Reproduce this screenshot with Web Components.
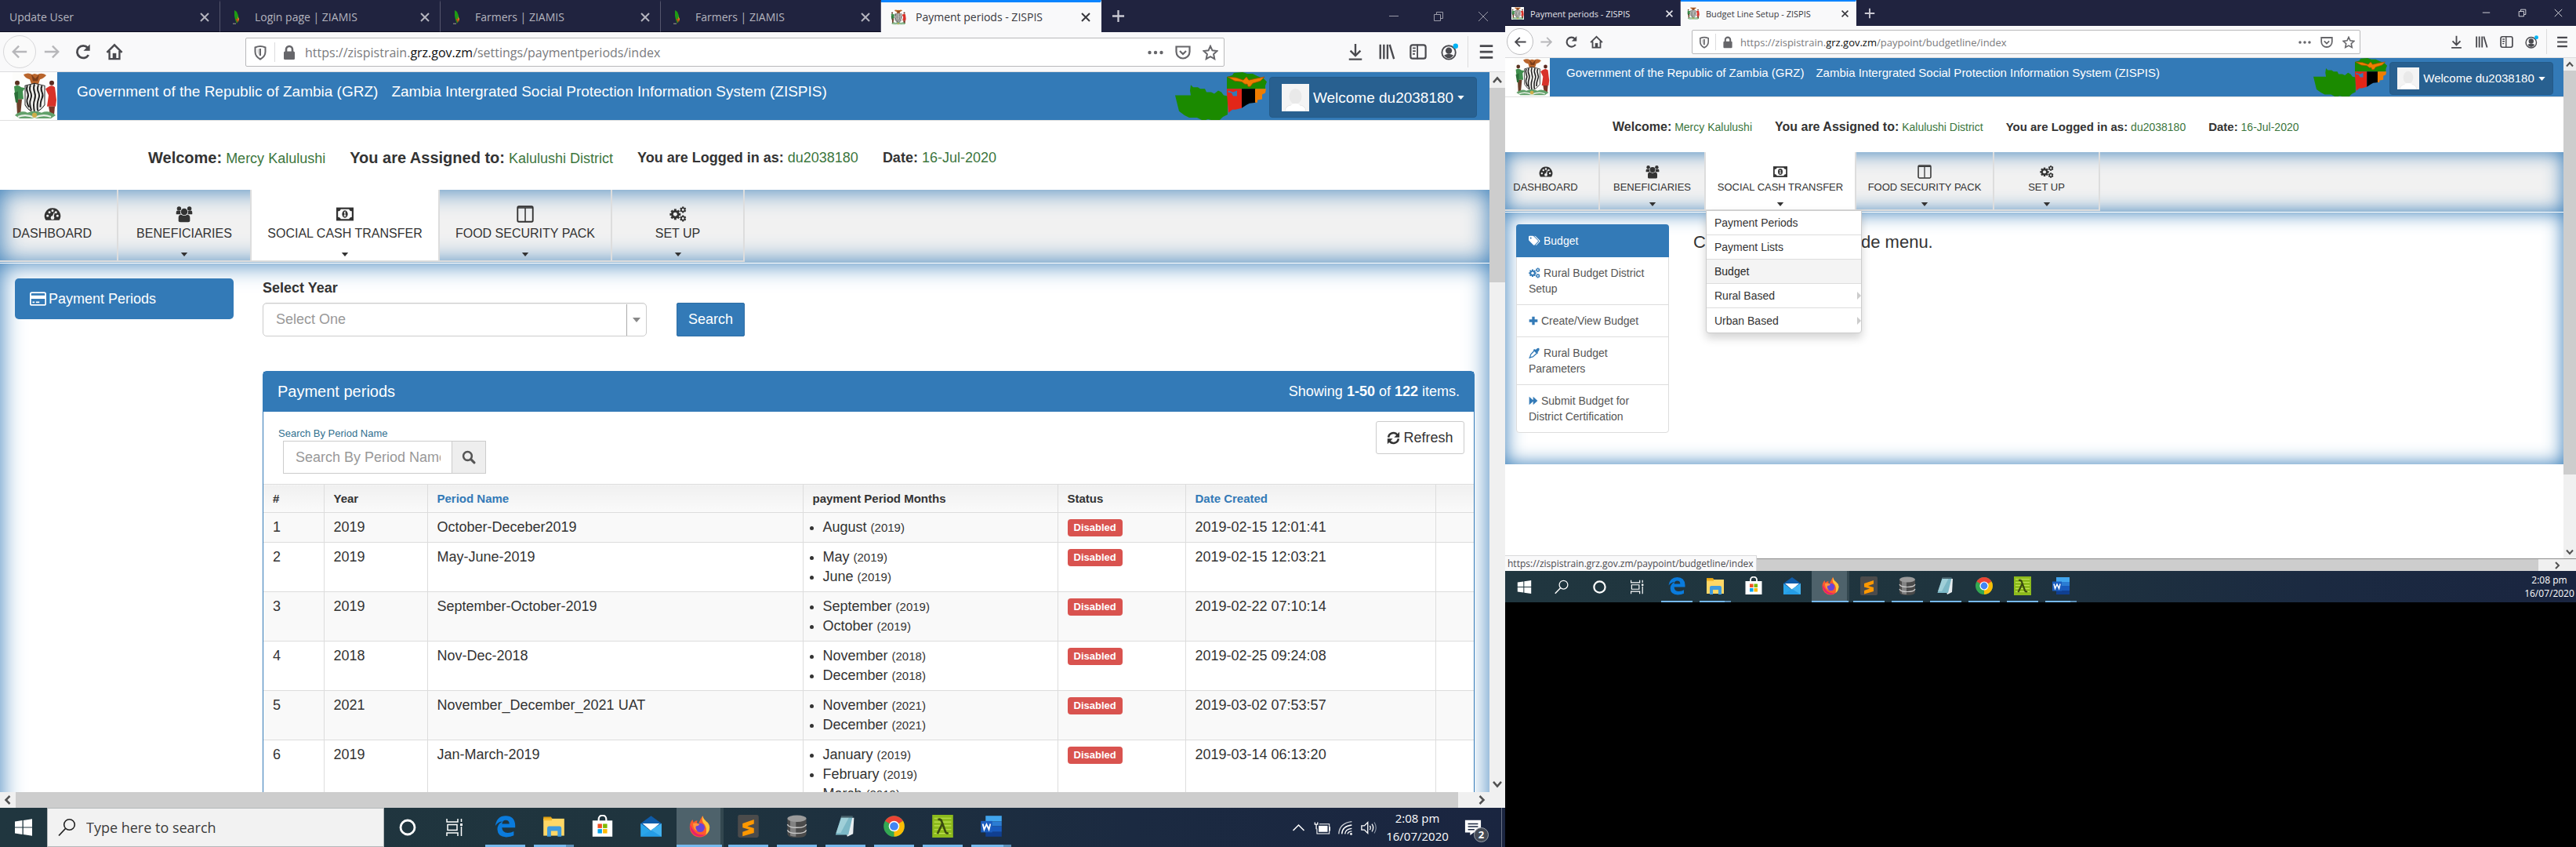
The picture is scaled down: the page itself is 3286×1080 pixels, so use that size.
<!DOCTYPE html>
<html lang="en">
<head>
<meta charset="utf-8">
<title>ZISPIS desktops</title>
<style>
html,body{margin:0;height:100%;background:#000;overflow:hidden}
body{display:grid;grid-template-columns:1920fr 1366fr;align-items:start;font-family:"Liberation Sans",Arial,sans-serif;color:#333}
desk-screen.large{
  aspect-ratio:1920/1080;
  --tab-h:41px;--tab-w:281px;--tab-font:14px;--tab-pad:12px;--tab-line:3px;--tab-ico:20px;--x-sz:14px;--ctl:57px;--ctl-sz:14px;--plus-w:42px;
  --bar-h:51px;--bar-pad:4px;--circle:42px;--tool:40px;--tool-sz:22px;--spring:147px;--url-m:7px;--url-font:16px;--url-slot:36px;--url-act:35px;--url-sz:20px;
  --sb:20px;--sb-thumb:248px;
  --head-h:61px;--logo-w:73px;--logo-img:57px;--head-font:19px;--head-pad:12px;--head-in:25px;--head-gap:17px;--map-w:117px;--user-h:52px;--user-w:265px;--user-m:6px;--user-r:16px;--ava:35px;--user-font:19px;
  --info-h:88px;--info-top:35px;--info-left:189px;--info-gap:31px;--info-big:20px;--info-b:18px;--fs:18px;--lh:25px;
  --nav-h:92px;--nav-top:20px;--nav-ico:22px;--nav-font:16px;--nav-gap:1px;--nav-caret:11px;--nav-off:16px;--glow:31px;
  --w1:151px;--w2:170px;--w3:240px;--w4:220px;--w5:169px;
  --task-h:50px;--cell:60px;--app:62px;--app-sz:29px;--app-u:51px;--app-uh:3px;--app-m:3px;--task-ico:24px;--clock:94px;--clock-font:15px;--clock-lh:23px;
}
desk-screen.small{
  aspect-ratio:1366/768;
  --tab-h:33px;--tab-w:224px;--tab-font:11px;--tab-pad:8px;--tab-line:2px;--tab-ico:16px;--x-sz:11px;--ctl:46px;--ctl-sz:11px;--plus-w:34px;
  --bar-h:41px;--bar-pad:2px;--circle:34px;--tool:32px;--tool-sz:17px;--spring:106px;--url-m:5px;--url-font:13px;--url-slot:29px;--url-act:28px;--url-sz:16px;
  --sb:16px;--sb-thumb:515px;
  --head-h:49px;--logo-w:57px;--logo-img:45px;--head-font:15px;--head-pad:9px;--head-in:21px;--head-gap:15px;--map-w:94px;--user-h:42px;--user-w:209px;--user-m:5px;--user-r:13px;--ava:28px;--user-font:15px;
  --info-h:70px;--info-top:28px;--info-left:137px;--info-gap:29px;--info-big:16px;--info-b:15px;--fs:14px;--lh:20px;
  --nav-h:75px;--nav-top:16px;--nav-ico:18px;--nav-font:13px;--nav-gap:1px;--nav-caret:8px;--nav-off:16px;--glow:25px;
  --w1:121px;--w2:135px;--w3:192px;--w4:176px;--w5:135px;
  --task-h:40px;--cell:48px;--app:49px;--app-sz:24px;--app-u:40px;--app-uh:2px;--app-m:2px;--task-ico:19px;--clock:68px;--clock-font:12px;--clock-lh:17px;
}
</style>
</head>
<body>
<desk-screen class="large">
  <browser-window dim>
    <browser-tab slot="tabs">Update User</browser-tab>
    <browser-tab slot="tabs" icon="favmap">Login page | ZIAMIS</browser-tab>
    <browser-tab slot="tabs" icon="favmap">Farmers | ZIAMIS</browser-tab>
    <browser-tab slot="tabs" icon="favmap">Farmers | ZIAMIS</browser-tab>
    <browser-tab slot="tabs" icon="arms" active>Payment periods - ZISPIS</browser-tab>
    <span slot="path">/settings/paymentperiods/index</span>
    <zispis-page><payment-periods></payment-periods></zispis-page>
  </browser-window>
  <task-bar slot="taskbar" searchbox></task-bar>
</desk-screen>
<desk-screen class="small">
  <browser-window status="https://zispistrain.grz.gov.zm/paypoint/budgetline/index">
    <browser-tab slot="tabs" icon="arms">Payment periods - ZISPIS</browser-tab>
    <browser-tab slot="tabs" icon="arms" active>Budget Line Setup - ZISPIS</browser-tab>
    <span slot="path">/paypoint/budgetline/index</span>
    <zispis-page menu><budget-setup></budget-setup></zispis-page>
  </browser-window>
  <task-bar slot="taskbar"></task-bar>
</desk-screen>

<script>
const BASE = `*,:host{box-sizing:border-box}a{color:inherit;text-decoration:none}button,input,select{font:inherit;color:inherit;background:none;border:0;padding:0;margin:0}
button{display:flex;align-items:center;justify-content:center}`;
const UI = `"Open Sans","Noto Sans",sans-serif`;

const gear = (cx, cy, r, n, tooth, hole) => {
  let teeth = '';
  for (let i = 0; i < n; i++) teeth += `<rect x="${cx - tooth / 2}" y="${cy - r}" width="${tooth}" height="${r}" transform="rotate(${i * 360 / n} ${cx} ${cy})"/>`;
  return `${teeth}<path fill-rule="evenodd" d="M${cx - r * .76} ${cy}a${r * .76} ${r * .76} 0 1 0 ${r * 1.52} 0a${r * .76} ${r * .76} 0 1 0 ${-r * 1.52} 0z"/><circle cx="${cx}" cy="${cy}" r="${hole}" fill="var(--hole,#eff0f1)"/>`;
};
const S = 'fill="none" stroke="currentColor" stroke-width="2"';
const ICONS = {
  x: ['0 0 14 14', `<path ${S} d="M2 2l10 10M12 2L2 12"/>`],
  plus: ['0 0 18 18', `<path fill="none" stroke="currentColor" stroke-width="2.400" d="M9 1v16M1 9h16"/>`],
  min: ['0 0 14 14', `<path fill="none" stroke="currentColor" d="M1 6.500h12"/>`],
  restore: ['0 0 14 14', `<path fill="none" stroke="currentColor" d="M1.500 4.500h8v8h-8zM4.500 4V1.500h8v8H10"/>`],
  thinx: ['0 0 14 14', `<path fill="none" stroke="currentColor" d="M1 1l12 12M13 1L1 13"/>`],
  back: ['0 0 24 24', `<path fill="none" stroke="currentColor" stroke-width="2.600" d="M22 12H3M11 4l-8 8 8 8"/>`],
  fwd: ['0 0 24 24', `<path fill="none" stroke="currentColor" stroke-width="2.600" d="M2 12h19M13 4l8 8-8 8"/>`],
  reload: ['0 0 24 24', `<path fill="none" stroke="currentColor" stroke-width="3" d="M19.500 16.500A8.500 8.500 0 1 1 18.500 6.500"/><path fill="currentColor" d="M21.500 1.500v9h-9z"/>`],
  home: ['0 0 24 24', `<path fill="none" stroke="currentColor" stroke-width="2.600" d="M1.500 13L12 2.500 22.500 13M5 11v11h14V11"/><path fill="currentColor" d="M9.500 14h5v8h-5z"/>`],
  shield: ['0 0 20 20', `<path ${S} d="M3.500 3.500Q10 .5 16.500 3.500V9q0 6-6.500 9.500Q3.500 15 3.500 9z"/><path fill="currentColor" d="M10 5v9.500Q6.500 12 6.500 9V5.500z" opacity=".3"/><path ${S} d="M10 5v9"/>`],
  lock: ['0 0 20 20', `<rect x="3" y="8.500" width="14" height="10.500" rx="1.500" fill="currentColor"/><path fill="none" stroke="currentColor" stroke-width="2.600" d="M6 9V6a4 4 0 0 1 8 0v3"/>`],
  dots: ['0 0 20 20', `<g fill="currentColor"><circle cx="2.500" cy="10" r="2.200"/><circle cx="10" cy="10" r="2.200"/><circle cx="17.500" cy="10" r="2.200"/></g>`],
  pocket: ['0 0 20 20', `<path fill="none" stroke="currentColor" stroke-width="2.200" d="M1.500 2.500h17V9a8.500 8.500 0 0 1-17 0zM6 8l4 4 4-4"/>`],
  star: ['0 0 20 20', `<path ${S} d="M10 1.800l2.500 5.500 6 .7-4.400 4.100 1.200 6L10 15.100 4.700 18.100l1.200-6L1.500 8l6-.7z"/>`],
  download: ['0 0 24 24', `<path fill="none" stroke="currentColor" stroke-width="2.600" d="M12 1v16M5 10.500l7 7 7-7M3 22.500h18"/>`],
  library: ['0 0 24 24', `<path fill="none" stroke="currentColor" stroke-width="2.600" d="M3 2v20M8 2v20M13 2v20M16 2l6 20"/>`],
  sidebar: ['0 0 24 24', `<rect fill="none" stroke="currentColor" stroke-width="2.400" x="1.500" y="2.500" width="21" height="19" rx="3"/><path ${S} d="M11 2v20M4.500 7h4M4.500 11h4M4.500 15h3"/>`],
  account: ['0 0 24 24', `<circle ${S} cx="11" cy="13" r="9.500"/><circle cx="11" cy="10.500" r="4.500" fill="currentColor"/><path fill="currentColor" d="M4.500 17q6.500-4 13 0-2.500 4-6.500 4t-6.500-4z"/><circle cx="20.500" cy="4" r="3.500" fill="#00b3f4"/>`],
  menu: ['0 0 24 24', `<path fill="none" stroke="currentColor" stroke-width="3" d="M3 4h18M3 12h18M3 20h18"/>`],
  up: ['0 0 16 16', `<path ${S} d="M4 10.500L8 6l4 4.500"/>`],
  down: ['0 0 16 16', `<path ${S} d="M4 5.500L8 10l4-4.500"/>`],
  left: ['0 0 16 16', `<path ${S} d="M10 4L6 8l4 4"/>`],
  right: ['0 0 16 16', `<path ${S} d="M6 4l4 4-4 4"/>`],
  caret: ['0 0 10 6', `<path fill="currentColor" d="M0 0h10L5 6z"/>`],
  arms: ['0 0 57 60', `<rect width="57" height="60" fill="#fdfdfb"/>
    <path d="M14 3q6-3 11 0l3-1 4 1q6-3 11 1-3 4-8 5l-2 6h-9l-2-6q-6-1-8-6z" fill="#b9652c"/><path d="M24 3l5 5 5-5-2 8h-6z" fill="#7c3f1c"/>
    <path d="M16 17l12-3 13 3v24q-5 7-13 10-8-3-12-10z" fill="#f4f4f0" stroke="#222" stroke-width="1"/>
    <path d="M19 17q-2 4 0 8t0 8 2 11M23 16q-2 5 0 9t0 9 1 14M28 15q-2 5 0 10t0 10 0 15M33 16q-2 5 0 9t0 9-1 14M37.500 17q-2 4 0 8t0 8-2 11" fill="none" stroke="#222" stroke-width="2"/>
    <circle cx="6" cy="13.500" r="3" fill="#5a3220"/><path d="M2 18q5-3 9 1l5 1-3 4 1 10H4z" fill="#3f8f4d"/><path d="M5 34h7l-2 20H6z" fill="#6b3f2a"/><path d="M2 26l2 12h3V24z" fill="#2b6e38"/>
    <circle cx="50" cy="13.500" r="3" fill="#5a2a20"/><path d="M45 19q5-4 9 0l2 16-1 8H44l2-14-4-8z" fill="#d8322a"/><path d="M46 43h8l-1 11h-5z" fill="#7a3326"/>
    <path d="M3 54q8-7 16-3 9-4 18 0 9-4 18 3l-6 4H9z" fill="#62a06a"/><path d="M7 56q10-4 21 1 11-5 21-1" fill="none" stroke="#e8efe6" stroke-width="2"/><circle cx="28" cy="54" r="3" fill="#cfae4a"/>`],
  favmap: ['0 0 20 20', `<path d="M6 1l3 2 2 5v4l-4 1-1-5z" fill="#1f9b14"/><path d="M8 7l3 2 1 4-3 5-2-5z" fill="#1f9b14"/><path d="M8 12h3l-1 5z" fill="#e52a1a"/><path d="M10 9l2 3-1 4z" fill="#f0862a"/><path d="M4 17.500h4V19H4z" fill="#777"/>`],
  map: ['0 0 117 60', `<path fill="#1b8a00" d="M0 29h20l-1-6 1-7 3 3 6 0 3 2 6 0 2 4 6 0 4 2 5-4 4 2 3 4 5 1v23l-6 3-5 5-6 0-8-2-6 2-8-4-10 0-6-3-7-5z"/>
    <path fill="#1b8a00" d="M66 21V6l7-2 2-3 11-1 6 2 7 0 6 3 8 3 4 4-2 5 0 4z"/>
    <path fill="#e32618" d="M66 27V21h19v24l-8 2-4 0-5 4z"/><path fill="#337ab7" d="M68 23l6 2 5-2 0 7-5 0-2-4-5-1z"/>
    <path fill="#000" d="M85 21h18v17l-8 1-4 2-6 4z"/><path fill="#ef7d00" d="M102 21h14l-1 5-4 2 0 6-6 1 0 3-3 0z"/>
    <path fill="#ef7d00" d="M67 6l11 1 9 3 4-4 3 4 9-2 11-2-5 5-10 3-3 4-3 0-1-3-3 0-4-3-9-1z" stroke="#a34c00" stroke-width=".8"/>`],
  person: ['0 0 35 35', `<rect width="35" height="35" fill="#f4f4f4"/><path d="M4 35q1-8 9-8h9q8 0 9 8z" fill="#fff" stroke="#dcdcdc" stroke-width=".6"/><ellipse cx="17.500" cy="16" rx="8" ry="10" fill="#e9e9e9"/><ellipse cx="17.500" cy="28" rx="6" ry="3" fill="#fff"/>`],
  dash: ['0 0 28 24', `<path fill="currentColor" d="M14 2A13 13 0 0 0 3 22h22A13 13 0 0 0 14 2z"/><g fill="var(--hole,#eff0f1)"><circle cx="6" cy="15" r="1.900"/><circle cx="9" cy="9" r="1.900"/><circle cx="14" cy="6.500" r="1.900"/><circle cx="22" cy="15" r="1.900"/><circle cx="19.500" cy="9" r="1.900"/><circle cx="14" cy="18" r="3"/><path d="M13 17l3.500-8 1 .4-2 8.600z"/></g>`],
  group: ['0 0 30 28', `<g fill="currentColor"><circle cx="15" cy="10" r="5.800"/><circle cx="6" cy="4.500" r="3.700"/><circle cx="24" cy="4.500" r="3.700"/><path d="M5 26V20q0-5 5-5 5 3.500 10 0 5 0 5 5v6q0 2-3 2H8q-3 0-3-2zM1 14V11q0-3 2.500-3 2.500 1 5 .5-1 4 1 6H2.500Q1 14.500 1 14zM29 14V11q0-3-2.500-3-2.500 1-5 .5 1 4-1 6h7Q29 14.500 29 14z"/></g>`],
  money: ['0 0 30 24', `<rect x="1.500" y="2" width="27" height="20" fill="none" stroke="currentColor" stroke-width="3"/><path fill="currentColor" d="M2 2h6q0 5-6 5zM28 2h-6q0 5 6 5zM2 22h6q0-5-6-5zM28 22h-6q0-5 6-5z"/><ellipse cx="15" cy="12" rx="5" ry="6.500" fill="currentColor"/><path stroke="#fff" stroke-width="1.600" fill="none" d="M13.500 9.500L15 8.500v6.500M13 15.200h4"/>`],
  columns: ['0 0 26 26', `<rect x="1.500" y="1.500" width="23" height="23" rx="2" fill="none" stroke="currentColor" stroke-width="2.200"/><path fill="none" stroke="currentColor" stroke-width="1.800" d="M13 3v21M2 3.500h22"/>`],
  cogs: ['0 0 30 28', `<g fill="currentColor">${gear(10, 14.5, 9.5, 8, 4, 3.4)}${gear(23.5, 6.5, 5.5, 6, 3, 1.9)}${gear(23.5, 21.5, 5.5, 6, 3, 1.9)}</g>`],
  card: ['0 0 24 20', `<path fill="none" stroke="currentColor" stroke-width="2" d="M3 1h18q2 0 2 2v14q0 2-2 2H3q-2 0-2-2V3q0-2 2-2z"/><path fill="currentColor" d="M1 5h22v5H1zM4 14h3v2H4zM9 14h5v2H9z"/>`],
  search: ['0 0 20 20', `<circle cx="8.300" cy="8.300" r="6" fill="none" stroke="currentColor" stroke-width="2.800"/><path stroke="currentColor" stroke-width="3.400" stroke-linecap="round" d="M13 13l4.700 4.700"/>`],
  refresh: ['0 0 20 20', `<path fill="none" stroke="currentColor" stroke-width="3" d="M2.500 9A7.500 7.500 0 0 1 16 5.500M17.500 11A7.500 7.500 0 0 1 4 14.500"/><path fill="currentColor" d="M19 1v8h-8zM1 19v-8h8z"/>`],
  tags: ['0 0 24 20', `<path fill="currentColor" fill-rule="evenodd" d="M0 2q0-2 2-2h6q1.500 0 3 1.500L18.500 9q1.500 1.500 0 3l-6 6.500q-1.500 1.500-3 0L1.500 10.500Q0 9 0 7.500zM4.200 2.600a1.700 1.700 0 1 0 .1 0z"/><path fill="currentColor" d="M11.500 0q2 0 3.500 1.500L22.500 9q1.500 1.500 0 3l-6 6.500q-1.200 1.200-2.500.6L20.500 12q1-1.500 0-2.500z"/>`],
  cross: ['0 0 18 20', `<path fill="currentColor" d="M6.500 2h5v5.500H17v5h-5.500V18h-5v-5.500H1v-5h5.500z"/>`],
  dropper: ['0 0 20 20', `<path fill="currentColor" d="M13 3.500Q15.500 0 18 1.500 20 3.500 17 7l-1.500 1.500 1 1.500-2 2-7-7 2-2 1.500 1z"/><path fill="none" stroke="currentColor" stroke-width="1.800" d="M9 6.500L3 13l-1 4-1 2 2-1 4-1 6.500-6"/>`],
  ff: ['0 0 18 20', `<path fill="currentColor" d="M1 2l7.500 7V2L17 10 8.500 18v-7L1 18z"/>`],
  win: ['0 0 24 24', `<path fill="#fff" d="M1 4.500l9.500-1.400v8.300H1zM11.800 2.900L23 1.300v10.100H11.800zM1 12.600h9.500v8.300L1 19.500zM11.800 12.600H23v10.100l-11.200-1.600z"/>`],
  loupe: ['0 0 24 24', `<circle cx="14.500" cy="8.500" r="6.800" fill="none" stroke="currentColor" stroke-width="1.600"/><path stroke="currentColor" stroke-width="1.800" d="M9.500 13.500L1 22.500"/>`],
  ring: ['0 0 24 24', `<circle cx="12" cy="12" r="9" fill="none" stroke="#fff" stroke-width="2.800"/>`],
  task: ['0 0 24 24', `<path fill="none" stroke="#fff" stroke-width="1.500" d="M2 1v4h14V1M2 23v-4h14v4M3 8.500h12v7H3zM20.500 1v4M20.500 11v12"/><path fill="#fff" d="M19 7h3v3h-3z"/>`],
  edge: ['0 0 24 24', `<path fill="#0a7bdc" d="M1.500 11.500Q3 1 12.500 1 22 1 22.500 11v2.500H8.500Q9 19 14.500 19q4 0 6.500-1.700v4.500Q18 23.500 13 23.500 4 23 3.700 15.500 3.500 10 9 7 5 7 1.500 11.500zM8.600 9.500h7.700q0-4-3.800-4-3.500 0-3.900 4z"/>`],
  folder: ['0 0 24 24', `<path fill="#e0a010" d="M1 2h8l2 3H1z"/><path fill="#ffd766" d="M1 4h22v18H1z"/><path fill="#f5b92e" d="M1 4h9v2H1z"/><path fill="#3f9bdf" d="M5 23v-9q0-2 2-2h11q2 0 2 2v9h-4v-6H9v6z"/>`],
  store: ['0 0 24 24', `<path fill="none" stroke="#fff" stroke-width="1.800" d="M8 7V4.500a4 4 0 0 1 8 0V7"/><path fill="#fff" d="M1.500 6h21v17h-21z"/><path fill="#f25022" d="M7 9.500h4.500V14H7z"/><path fill="#7fba00" d="M12.500 9.500H17V14h-4.500z"/><path fill="#00a4ef" d="M7 15h4.500v4.500H7z"/><path fill="#ffb900" d="M12.500 15H17v4.500h-4.500z"/>`],
  mail: ['0 0 24 24', `<path fill="#0f5ba8" d="M1 9l11-8 11 8v5H1z"/><path fill="#fff" d="M3 9h18l-9 8z"/><path fill="#2aa5ea" d="M1 9l11 8 11-8v14H1z"/><path fill="#57c6fa" d="M12 16l11 7V9z"/><path fill="#1d8fe0" d="M1 23L23 9v14z" opacity=".35"/>`],
  firefox: ['0 0 24 24', `<path fill="#ff5a2c" d="M12 23.500A10.500 10.500 0 0 1 1.500 13Q1.500 8 4.500 5l1 3q2-2 4-2-1 2 1 4Q13 4 15 1q1 4 4 6t3.500 6A10.500 10.500 0 0 1 12 23.500z"/><path fill="#ffc53a" d="M15 1q1 4 4 6t3.500 6q0 5-4 8 2-8-3-13-1.500-3-.5-7z"/><path fill="#e5226e" d="M2 10q-1 7 5 11.500 5 3 11-.5-7 1-11-3T2 10z"/><circle cx="12.500" cy="13.500" r="4.800" fill="#6b45d8"/><path fill="#ff9640" d="M5 9q4-1 7 1-1 2-4 2-1 3 2 5-5-1-5-8z"/>`],
  sublime: ['0 0 24 24', `<rect x="1" y="0" width="22" height="24" rx="2" fill="#4b4b4b"/><path fill="#ff9800" d="M6 9l12-4v4.500L11 12l7 2v5L6 22.500V18l7-2.500-7-2z"/>`],
  db: ['0 0 24 24', `<path fill="#4a4a4a" d="M2 4v16q0 4 10 4t10-4V4z"/><path fill="#9a9a9a" d="M5 6v16q3 1 6 1V7z" opacity=".7"/><ellipse cx="12" cy="4" rx="10" ry="3.500" fill="#9b9b9b"/><path fill="none" stroke="#c9c9c9" stroke-width="1.200" d="M2 10q1 3.500 10 3.500T22 10M2 16q1 3.500 10 3.500T22 16"/>`],
  notepad: ['0 0 24 24', `<path fill="#e9eef0" d="M8 3h13l-1 17-6 3z"/><path fill="#7cb8c6" d="M7.500 2h12L15 21H1.500z"/><path fill="#b7dde5" d="M8 2l8 0-9 17H2z" opacity=".6"/><path fill="#46606a" d="M7.500 1h12v2h-12z"/>`],
  chrome: ['0 0 24 24', `<circle cx="12" cy="12" r="11" fill="#34a853"/><path fill="#ea4335" d="M12 12L2.500 6.500A11 11 0 0 1 21.500 6.500z"/><path fill="#fbbc05" d="M12 12l9.500-5.500A11 11 0 0 1 12 23z"/><circle cx="12" cy="12" r="5.600" fill="#fff"/><circle cx="12" cy="12" r="4.400" fill="#4285f4"/>`],
  lambda: ['0 0 24 24', `<path fill="#8dbb1c" d="M1 0h22v24H1z"/><path stroke="#c2e356" stroke-width="1" d="M3 3.500h18M3 7.500h18M3 11.500h18M3 15.500h18M3 19.500h18"/><path fill="none" stroke="#3a4a10" stroke-width="2.200" d="M7 5q3-1 4 2l4 11q1 2 3 1M11.500 9.500L6.500 20"/>`],
  word: ['0 0 24 24', `<path fill="#41a5ee" d="M6 1h17v6H6z"/><path fill="#2b7cd3" d="M6 7h17v5H6z"/><path fill="#185abd" d="M6 12h17v6H6z"/><path fill="#103f91" d="M6 18h17v5H6z"/><path fill="#1b5dbe" d="M1 6.500h12v12H1z"/><path fill="none" stroke="#fff" stroke-width="1.500" d="M3 9.500l1.500 6L7 10l2.500 5.500 1.500-6"/>`],
  battery: ['0 0 24 24', `<path fill="#fff" d="M7 9h13v9H7z"/><path fill="none" stroke="#fff" stroke-width="1.200" d="M4.500 13v7.500h18v-14H8M23.500 10.500v6"/><path fill="none" stroke="#fff" stroke-width="1.500" d="M1.500 4v3h4V4M3.500 7v7"/>`],
  wifi: ['0 0 24 24', `<g fill="none" stroke="#fff" stroke-width="1.500"><path d="M2 21Q3 5 21 3" opacity=".8"/><path d="M6.500 21Q7 9.500 21 8"/><path d="M11 21Q11.500 14 21 13"/><path d="M15 21q.5-3.500 6-4"/></g><circle cx="20" cy="21" r="1.600" fill="#fff"/>`],
  volume: ['0 0 24 24', `<path fill="none" stroke="#fff" stroke-width="1.500" d="M1 9h4l5-5v16l-5-5H1zM13 9q2 3 0 6M16 6.500q4 5.500 0 11"/><path fill="none" stroke="#8a95a5" stroke-width="1.300" d="M19.500 4q5 8 0 16"/>`],
  chev: ['0 0 24 24', `<path fill="none" stroke="#fff" stroke-width="1.800" d="M4 16l8-8 8 8"/>`],
  note: ['0 0 24 24', `<path fill="#fff" d="M1 2h22v17H13l-5 4v-4H1z"/><path stroke="#1b2740" stroke-width="1.600" d="M5 7h14M5 11h14M5 15h9"/>`],
};

function define(name, css, html) {
  customElements.define(name, class extends HTMLElement {
    constructor() {
      super();
      this.attachShadow({ mode: 'open' });
    }
    connectedCallback() {
      if (this.done) return;
      this.done = true;
      this.shadowRoot.innerHTML = `<style>${BASE}${css}</style>` + (typeof html === 'function' ? html(this) : html);
    }
  });
}

define('ui-icon', `:host{display:inline-block;width:var(--sz,16px);height:var(--sz,16px);flex:none}svg{display:block;width:100%;height:100%}`,
  el => { const n = el.getAttribute('name'), [box, art] = ICONS[n]; return `<svg viewBox="${box}" ${n === 'arms' || n === 'map' ? 'preserveAspectRatio="none"' : ''} aria-hidden="true">${art}</svg>`; });

define('desk-screen', `:host{display:flex;flex-direction:column;overflow:hidden;min-width:0}::slotted(browser-window){flex:1;min-height:0}`,
  `<slot></slot><slot name="taskbar"></slot>`);

define('browser-tab', `
:host{display:flex;align-items:center;width:var(--tab-w);height:var(--tab-h);flex:none;padding:0 var(--tab-pad);gap:var(--tab-pad);font-family:${UI};font-size:var(--tab-font);color:#b4b4be;border-right:1px solid #55566d;border-top:var(--tab-line) solid transparent;border-bottom:1px solid #0c0c20}
:host([active]){background:#f9f9fa;color:#38383d;border-top-color:#0a84ff;border-right-color:#f9f9fa;border-bottom-color:#f9f9fa}
span{flex:1;white-space:nowrap}.ico{--sz:var(--tab-ico)}.x{--sz:var(--x-sz)}`,
  el => `${el.hasAttribute('icon') ? `<ui-icon class="ico" name="${el.getAttribute('icon')}"></ui-icon>` : ''}<span><slot></slot></span><button aria-label="Close tab"><ui-icon class="x" name="x"></ui-icon></button>`);

define('browser-window', `
:host{display:flex;flex-direction:column;background:#fff;position:relative;--tint:#e4e4ea}
:host([dim]){--tint:#b4b4be}
.tabs{display:flex;background:#20233f;height:var(--tab-h);flex:none}
.tabs ::slotted(browser-tab:not([active])){color:var(--tint)}
.new{width:var(--plus-w);color:#c9c9d2;--sz:calc(var(--x-sz) + 3px)}
.grow{flex:1}.ctl{width:var(--ctl);--sz:var(--ctl-sz);color:#fff}:host([dim]) .ctl{color:#9a9aa8}
.bar{display:flex;align-items:center;background:#f9f9fa;height:var(--bar-h);flex:none;border-bottom:1px solid #dcdcde;padding:0 var(--bar-pad);color:#4a4a4f;--sz:var(--tool-sz)}
.t{width:var(--tool);height:100%}.off{color:#b7b7ba}
.back{width:var(--circle);height:var(--circle);border:1px solid #bdbdc0;border-radius:50%;background:#fff}:host([dim]) .back{color:#b7b7ba;border-color:#d8d8da;background:#fafafa}
.spring{width:var(--spring)}
.url{flex:1;display:flex;align-items:center;align-self:stretch;margin:var(--url-m) 0 calc(var(--url-m) - 1px);background:#fff;border:1px solid #b9b9bb;border-radius:2px;--sz:var(--url-sz);color:#66666a}
.s{width:var(--url-slot);display:flex;justify-content:center}.a{width:var(--url-act)}
.v{width:1px;background:#dcdcde;height:70%}.sep{width:1px;height:80%;background:#dcdcde;margin:0 3px}
.addr{flex:1;font-family:${UI};font-size:var(--url-font);color:#7a7a7d;padding-left:2px;white-space:nowrap}.addr b{font-weight:400;color:#0c0c0d}
.view{flex:1;display:flex;min-height:0}.page{flex:1;min-width:0;overflow:hidden}
.vs{width:var(--sb);background:#f0f0f0;display:flex;flex-direction:column;color:#505050;--sz:var(--sb)}
.thumb{background:#cdcdcd}.vs .thumb{height:var(--sb-thumb)}.vs .rest{flex:1}
.hs{height:var(--sb);background:#f0f0f0;display:flex;color:#505050;--sz:var(--sb)}.hs .thumb{flex:1}.hs .rest{width:var(--sb)}
:host([status]) .hs{border-top:1px solid #8c8c8c}
.status{position:absolute;left:0;bottom:0;height:20px;background:#f9f9fa;border:1px solid #d8d8da;border-left:0;border-bottom:0;font:12px/19px ${UI};color:#4a4a4f;padding:0 3px}`,
  el => `<div class="tabs"><slot name="tabs"></slot><button class="new" aria-label="New tab"><ui-icon name="plus"></ui-icon></button><div class="grow"></div>
<button class="ctl" aria-label="Minimize"><ui-icon name="min"></ui-icon></button><button class="ctl" aria-label="Restore"><ui-icon name="restore"></ui-icon></button><button class="ctl" aria-label="Close"><ui-icon name="thinx"></ui-icon></button></div>
<div class="bar"><button class="back" aria-label="Back"><ui-icon name="back"></ui-icon></button><button class="t off" aria-label="Forward"><ui-icon name="fwd"></ui-icon></button><button class="t" aria-label="Reload"><ui-icon name="reload"></ui-icon></button><button class="t" aria-label="Home"><ui-icon name="home"></ui-icon></button>
<div class="spring"></div><div class="url"><div class="s"><ui-icon name="shield"></ui-icon></div><div class="v"></div><div class="s"><ui-icon name="lock"></ui-icon></div><div class="addr">https://zispistrain.<b>grz.gov.zm</b><slot name="path"></slot></div>
${['dots', 'pocket', 'star'].map(n => `<button class="a" aria-label="${n}"><ui-icon name="${n}"></ui-icon></button>`).join('')}</div><div class="spring"></div>
${['download', 'library', 'sidebar', 'account'].map(n => `<button class="t" aria-label="${n}"><ui-icon name="${n}"></ui-icon></button>`).join('')}<div class="sep"></div><button class="t" aria-label="Menu"><ui-icon name="menu"></ui-icon></button></div>
<div class="view"><div class="page"><slot></slot></div><div class="vs"><ui-icon name="up"></ui-icon><div class="thumb"></div><div class="rest"></div><ui-icon name="down"></ui-icon></div></div>
<div class="hs"><ui-icon name="left"></ui-icon><div class="thumb"></div><div class="rest"></div><ui-icon name="right"></ui-icon><div class="rest"></div></div>
${el.hasAttribute('status') ? `<div class="status">${el.getAttribute('status')}</div>` : ''}`);

define('nav-item', `
:host{display:block;height:var(--nav-h);border-right:2px solid #ddd;border-bottom:2px solid #ddd}
:host([active]){background:#fff;--hole:#fff}
a{display:flex;flex-direction:column;align-items:center;padding-top:var(--nav-top);font-size:var(--nav-font);line-height:var(--lh);white-space:nowrap;gap:var(--nav-gap);--sz:var(--nav-ico)}
:host([plain]) a{padding-right:var(--nav-off)}
.c{width:10px;height:5px;margin-top:var(--nav-caret)}`,
  el => `<a href="#"><ui-icon name="${el.getAttribute('icon')}"></ui-icon><slot></slot>${el.hasAttribute('plain') ? '' : '<ui-icon class="c" name="caret"></ui-icon>'}</a>`);

define('drop-menu', `
:host{display:block;position:absolute;top:calc(100% - 2px);left:calc(var(--w1) + var(--w2));width:199px;z-index:5}
nav{background:#fff;border:1px solid #ccc;border-radius:0 0 4px 4px;box-shadow:0 6px 12px rgba(0,0,0,.175);font-size:var(--fs)}
a{display:flex;align-items:center;justify-content:space-between;height:31px;padding-left:10px;border-bottom:1px solid #ddd}a:last-child{border-bottom:0}a.on{background:#f4f4f4;color:#262626}
i{border:5px solid transparent;border-left-color:#ccc;border-right:0}`,
  `<nav><a href="#">Payment Periods</a><a href="#">Payment Lists</a><a href="#" class="on">Budget</a><a href="#">Rural Based<i></i></a><a href="#">Urban Based<i></i></a></nav>`);

define('zispis-page', `
:host{display:block;font-size:var(--fs);line-height:var(--lh)}
header{display:flex;height:calc(var(--head-h) + 1px);border-bottom:1px solid #e0e0e0}
.logo{width:var(--logo-w);display:flex;justify-content:flex-end}.logo ui-icon{width:var(--logo-img);height:var(--head-h)}
.blue{flex:1;display:flex;background:#337ab7;color:#fff}
.brand{display:flex;gap:var(--head-gap);padding:var(--head-pad) 0 0 var(--head-in);font-size:var(--head-font);flex:1;white-space:nowrap}
.map{width:var(--map-w);height:var(--head-h);margin-right:3px}
.user{height:var(--user-h);width:var(--user-w);margin:var(--user-m) var(--user-r) 0 0;background:#286090;border:1px solid #245a88;border-radius:4px;font-size:var(--user-font);white-space:nowrap;gap:5px;--sz:var(--ava)}
.user .c{width:9px;height:5px}
.info{display:flex;gap:var(--info-gap);height:var(--info-h);padding:var(--info-top) 0 0 var(--info-left);white-space:nowrap}
.info b{font-size:var(--info-b)}.info span{color:#3c763d}.info .big b{font-size:var(--info-big)}
.nav{display:flex;position:relative;height:calc(var(--nav-h) + 1px);background:#f1f1f1;box-shadow:inset 0 0 var(--glow) #337ab7;margin-bottom:1px}
.nav nav-item:nth-child(1){width:var(--w1)}.nav nav-item:nth-child(2){width:var(--w2)}.nav nav-item:nth-child(3){width:var(--w3)}.nav nav-item:nth-child(4){width:var(--w4)}.nav nav-item:nth-child(5){width:var(--w5)}`,
  el => `<header><div class="logo"><ui-icon name="arms"></ui-icon></div><div class="blue"><div class="brand"><span>Government of the Republic of Zambia (GRZ)</span><span>Zambia Intergrated Social Protection Information System (ZISPIS)</span></div>
<ui-icon class="map" name="map"></ui-icon><button class="user"><ui-icon name="person"></ui-icon>Welcome du2038180<ui-icon class="c" name="caret"></ui-icon></button></div></header>
<div class="info"><div class="big"><b>Welcome:</b> <span>Mercy Kalulushi</span></div><div class="big"><b>You are Assigned to:</b> <span>Kalulushi District</span></div><div><b>You are Logged in as:</b> <span>du2038180</span></div><div><b>Date:</b> <span>16-Jul-2020</span></div></div>
<div class="nav"><nav-item icon="dash" plain>DASHBOARD</nav-item><nav-item icon="group">BENEFICIARIES</nav-item><nav-item icon="money" active>SOCIAL CASH TRANSFER</nav-item><nav-item icon="columns">FOOD SECURITY PACK</nav-item><nav-item icon="cogs">SET UP</nav-item>${el.hasAttribute('menu') ? '<drop-menu></drop-menu>' : ''}</div><slot></slot>`);

define('period-table', `
:host{display:block}
table{width:100%;border-collapse:collapse;table-layout:fixed;line-height:25px}
th,td{border:1px solid #ddd;border-bottom:0;padding:6px 12px;text-align:left;vertical-align:top;font-weight:400}
th:first-child,td:first-child{border-left:0}th:last-child,td:last-child{border-right:0}
th{font-weight:700;font-size:15px;line-height:23px;background:linear-gradient(#f0f0f0,#fafafa)}th a{color:#337ab7}
tbody tr:nth-child(odd){background:#f9f9f9}
ul{margin:0;padding-left:13px}small{font-size:15px}
.tag{display:inline-block;background:#d9534f;color:#fff;font-size:13px;font-weight:700;line-height:22px;padding:0 8px;border-radius:4px;vertical-align:middle}`,
  () => {
    const rows = [['2019', 'October-Deceber2019', ['August 2019'], '2019-02-15 12:01:41'], ['2019', 'May-June-2019', ['May 2019', 'June 2019'], '2019-02-15 12:03:21'],
      ['2019', 'September-October-2019', ['September 2019', 'October 2019'], '2019-02-22 07:10:14'], ['2018', 'Nov-Dec-2018', ['November 2018', 'December 2018'], '2019-02-25 09:24:08'],
      ['2021', 'November_December_2021 UAT', ['November 2021', 'December 2021'], '2019-03-02 07:53:57'], ['2019', 'Jan-March-2019', ['January 2019', 'February 2019', 'March 2019'], '2019-03-14 06:13:20']];
    return `<table><colgroup>${[77, 132, 479, 325, 163, 319, 49].map(w => `<col style="width:${w}px">`).join('')}</colgroup>
<thead><tr><th>#</th><th>Year</th><th><a href="#">Period Name</a></th><th>payment Period Months</th><th>Status</th><th><a href="#">Date Created</a></th><th></th></tr></thead><tbody>
${rows.map((r, i) => `<tr><td>${i + 1}</td><td>${r[0]}</td><td>${r[1]}</td><td><ul>${r[2].map(m => { const [a, y] = m.split(' '); return `<li>${a} <small>(${y})</small></li>`; }).join('')}</ul></td><td><span class="tag">Disabled</span></td><td>${r[3]}</td><td></td></tr>`).join('')}</tbody></table>`;
  });

define('payment-periods', `
:host{display:flex;gap:37px;align-items:flex-start;min-height:900px;padding:19px 19px 0;box-shadow:inset 0 0 var(--glow) #337ab7}
.side{width:279px;height:52px;background:#337ab7;color:#fff;border-radius:5px;display:flex;align-items:center;padding-left:19px;gap:3px}.side ui-icon{width:21px;height:18px}
main{flex:1;min-width:0}
form.top{display:flex;align-items:flex-end;gap:38px;margin-bottom:44px}
.f{width:490px}.f label{display:block;font-weight:700;margin-bottom:6px}
.sel{display:flex;height:43px;border:1px solid #ccc;border-radius:5px;background:#fff;box-shadow:inset 0 1px 1px rgba(0,0,0,.075)}
select{flex:1;appearance:none;color:#999;padding-left:16px}.arr{width:25px;margin:1px 0 0;border-left:1px solid #aaa;display:flex;align-items:center;justify-content:center;color:#888}.arr ui-icon{width:10px;height:6px}
.go{height:43px;width:87px;background:#337ab7;border:1px solid #2e6da4;border-radius:2px;color:#fff}
.panel{border:1px solid #337ab7;border-radius:5px 5px 0 0;background:#fff}
.ph{display:flex;justify-content:space-between;align-items:center;height:51px;background:#337ab7;color:#fff;padding:0 18px}.ph h3{font-size:20px;font-weight:400;margin:0}
.tools{display:flex;justify-content:space-between;align-items:flex-start;height:92px;padding:12px 12px 0 19px}
.tools label{display:block;font-size:13px;line-height:19px;color:#31708f;padding-top:6px}
.g{display:flex;width:259px;height:42px;margin-left:6px;border:1px solid #ccc}.g input{flex:1;min-width:0;padding:0 14px 0 15px}.g input::placeholder{color:#999;opacity:1}.g button{width:43px;background:#eee;border-left:1px solid #ccc;color:#555;--sz:18px}
.re{width:113px;height:42px;border:1px solid #ccc;border-radius:3px;gap:4px;--sz:17px}`,
  `<a class="side" href="#"><ui-icon name="card"></ui-icon>Payment Periods</a><main><form class="top"><div class="f"><label for="year">Select Year</label><div class="sel"><select id="year"><option>Select One</option></select><span class="arr"><ui-icon name="caret"></ui-icon></span></div></div><button class="go" type="button">Search</button></form>
<section class="panel"><div class="ph"><h3>Payment periods</h3><div>Showing <b>1-50</b> of <b>122</b> items.</div></div><div class="tools"><div><label for="q">Search By Period Name</label><div class="g"><input id="q" type="text" placeholder="Search By Period Name"><button aria-label="Search"><ui-icon name="search"></ui-icon></button></div></div><button class="re"><ui-icon name="refresh"></ui-icon>Refresh</button></div><period-table></period-table></section></main>`);

define('budget-setup', `
:host{display:flex;gap:31px;align-items:flex-start;height:321px;padding:15px 14px 0;box-shadow:inset 0 0 var(--glow) #337ab7}
nav{width:195px;border:1px solid #ddd;border-radius:4px;background:#fff;color:#555}
a{display:block;padding:10px 15px;border-bottom:1px solid #ddd}a:last-child{border-bottom:0}
a.on{background:#337ab7;color:#fff;margin:-1px -1px 0;padding:11px 16px;border:0;border-radius:4px 4px 0 0}
a ui-icon{color:#337ab7;vertical-align:-2px;margin-right:4px;width:15px;height:14px;--hole:#fff}a.on ui-icon{color:#fff}a ui-icon.n{width:12px}
h3{margin:10px 0 0;font-size:22px;line-height:26px;font-weight:400}`,
  `<nav><a href="#" class="on"><ui-icon name="tags"></ui-icon>Budget</a><a href="#"><ui-icon name="cogs"></ui-icon>Rural Budget District Setup</a><a href="#"><ui-icon class="n" name="cross"></ui-icon>Create/View Budget</a><a href="#"><ui-icon name="dropper"></ui-icon>Rural Budget Parameters</a><a href="#"><ui-icon class="n" name="ff"></ui-icon>Submit Budget for District Certification</a></nav><h3>Click options on the side menu.</h3>`);

define('task-bar', `
:host{display:flex;height:var(--task-h);flex:none;background:linear-gradient(90deg,#20363f,#1f343e 45%,#1b2a41 75%,#1a2540);color:#fff;font-family:${UI};--sz:var(--task-ico)}
.cell{width:var(--cell)}
label{width:430px;display:flex;align-items:center;gap:12px;padding-left:13px;background:#f2f2f2;border:1px solid #b4b8ba;color:#222}input{flex:1;font-size:18px}input::placeholder{color:#3c3c3c;opacity:1}
.apps{display:flex;flex:1;margin-left:var(--app-m);--sz:var(--app-sz)}
.app{width:var(--app);display:flex;flex-direction:column;justify-content:flex-end;align-items:center}
.app ui-icon{margin:auto}.app i{width:var(--app-u);height:var(--app-uh);background:#76b9ed}.app.off i{background:none}.app.two i{background:linear-gradient(90deg,#76b9ed 80%,#5b8fb8 80%)}
.app.on{background:linear-gradient(90deg,transparent 3%,#4e626b 3%,#4e626b 93%,#33474f 93%)}.app.on i{width:94%}
.tray{display:flex}.tray button{width:30px;--sz:21px}
.clock{width:var(--clock);display:flex;flex-direction:column;align-items:center;justify-content:center;font-size:var(--clock-font);line-height:var(--clock-lh)}
.tray .note{width:48px;position:relative;--sz:22px}.note b{position:absolute;left:25px;top:25px;width:19px;height:19px;border-radius:50%;background:#444a55;border:1px solid #9aa0aa;font-size:13px;line-height:17px;text-align:center}
.edge{width:5px;margin-left:12px;border-left:1px solid #6a7385}`,
  el => {
    const box = el.hasAttribute('searchbox');
    const cell = n => `<button class="cell" aria-label="${n}"><ui-icon name="${n}"></ui-icon></button>`;
    const apps = [['edge'], ['folder', 'two'], ['store', 'off'], ['mail', 'off'], ['firefox', 'on'], ['sublime'], ['db'], ['notepad'], ['chrome'], ['lambda'], ['word', 'two']];
    return cell('win') + (box ? `<label><ui-icon name="loupe"></ui-icon><input type="text" placeholder="Type here to search" aria-label="Type here to search"></label>` : cell('loupe')) + cell('ring') + cell('task') +
      `<div class="apps">${apps.map(([n, c = '']) => `<button class="app ${c}" aria-label="${n}"><ui-icon name="${n}"></ui-icon><i></i></button>`).join('')}</div>
<div class="tray">${box ? ['chev', 'battery', 'wifi', 'volume'].map(n => `<button aria-label="${n}"><ui-icon name="${n}"></ui-icon></button>`).join('') : ''}<div class="clock"><span>2:08 pm</span><span>16/07/2020</span></div>${box ? '<button class="note" aria-label="Notifications"><ui-icon name="note"></ui-icon><b>2</b></button><span class="edge"></span>' : ''}</div>`;
  });
</script>
</body>
</html>
